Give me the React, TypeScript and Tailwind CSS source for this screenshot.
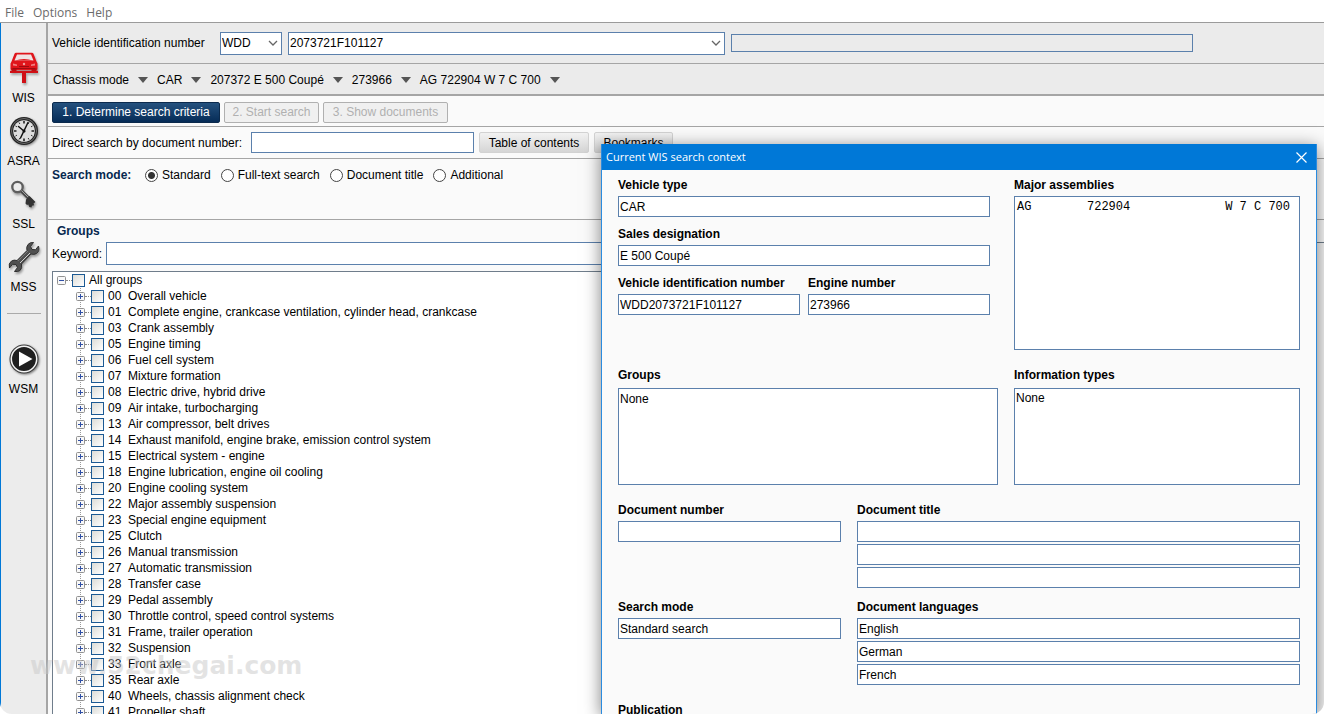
import React, { useState, type ReactNode } from "react";

const GROUPS: [string, string][] = [
  ["00", "Overall vehicle"],
  ["01", "Complete engine, crankcase ventilation, cylinder head, crankcase"],
  ["03", "Crank assembly"],
  ["05", "Engine timing"],
  ["06", "Fuel cell system"],
  ["07", "Mixture formation"],
  ["08", "Electric drive, hybrid drive"],
  ["09", "Air intake, turbocharging"],
  ["13", "Air compressor, belt drives"],
  ["14", "Exhaust manifold, engine brake, emission control system"],
  ["15", "Electrical system - engine"],
  ["18", "Engine lubrication, engine oil cooling"],
  ["20", "Engine cooling system"],
  ["22", "Major assembly suspension"],
  ["23", "Special engine equipment"],
  ["25", "Clutch"],
  ["26", "Manual transmission"],
  ["27", "Automatic transmission"],
  ["28", "Transfer case"],
  ["29", "Pedal assembly"],
  ["30", "Throttle control, speed control systems"],
  ["31", "Frame, trailer operation"],
  ["32", "Suspension"],
  ["33", "Front axle"],
  ["35", "Rear axle"],
  ["40", "Wheels, chassis alignment check"],
  ["41", "Propeller shaft"],
];

const CONTEXTS = ["Chassis mode", "CAR", "207372 E 500 Coupé", "273966", "AG 722904 W 7 C 700"];
const MODES = ["Standard", "Full-text search", "Document title", "Additional"];

function CarIcon() {
  return (
    <svg width="30" height="32" viewBox="0 0 30 32" aria-hidden="true" className="drop-shadow-[1px_2px_1px_rgba(0,0,0,0.3)]">
      <path d="M7 .8h16q1 0 1.500 1L27.500 9.500l1 2V17q0 1-1 1h-25q-1 0-1-1v-5.500l1-2L5.500 1.800q.5-1 1.500-1z" fill="#e0151b" />
      <path d="M8 2.500h14L24.500 8.500h-19z" fill="#efe3e3" />
      <path d="M6 8.500q9-3 18 0z" fill="#e0151b" />
      <path d="M2.500 16h5v3h-5zM22.500 16h5v3h-5z" fill="#b80d12" />
      <path d="M1 18.700h28v2.300H17V31h-4V21H1z" fill="#d01016" />
      <path d="M4 11.500l4 1v1.500l-4-.6zM26 11.500l-4 1v1.500l4-.6z" fill="#f08080" />
      <path d="M10 14.500h10M4 16.500h22" stroke="#a00b10" strokeWidth="1" />
      <circle cx="15" cy="12" r="1.200" fill="#f1a0a0" />
    </svg>
  );
}

function ClockIcon() {
  return (
    <svg width="30" height="30" viewBox="0 0 30 30" aria-hidden="true" className="drop-shadow-[1px_1px_1px_rgba(0,0,0,0.4)]">
      <circle cx="15" cy="15" r="14" fill="#232323" />
      <circle cx="15" cy="15" r="12.500" fill="none" stroke="#6d6d6d" strokeWidth="1" />
      <circle cx="15" cy="15" r="10.800" fill="#dedede" />
      <g stroke="#222" strokeWidth="1.600">
        <path d="M15 5v2.500M15 22.500V25M5 15h2.500M22.500 15H25" />
        <path d="M10 6.500l.8 1.400M20 6.500l-.8 1.400M6.500 10l1.400.8M23.500 10l-1.400.8M6.500 20l1.400-.8M23.500 20l-1.400-.8M10 23.500l.8-1.400M20 23.500l-.8-1.400" strokeWidth="1" />
      </g>
      <path d="M19 6.500L11.500 22M9.500 10.500l6 5" stroke="#111" strokeWidth="1.500" strokeLinecap="round" />
      <circle cx="15" cy="15" r="1.500" fill="#111" />
    </svg>
  );
}

function KeyIcon() {
  return (
    <svg width="28" height="30" viewBox="0 0 28 30" aria-hidden="true" className="drop-shadow-[1px_2px_1px_rgba(0,0,0,0.35)]">
      <circle cx="7.500" cy="8" r="5.200" fill="#ededed" stroke="#5e5e5e" strokeWidth="2.300" />
      <path d="M11.500 12L22 22.500" stroke="#4a4a4a" strokeWidth="3.400" />
      <path d="M11.500 11.500l11 11" stroke="#a0a0a0" strokeWidth="1" />
      <path d="M16 20.500l3.500-3.500 6 6-2 1.500.7 1.700-2.200.6-.5 1.700-2.200-.6-1-2.400-1.300.6-1.500-1.600z" fill="#333" />
    </svg>
  );
}

function WrenchIcon() {
  return (
    <svg width="32" height="32" viewBox="0 0 32 32" aria-hidden="true" className="drop-shadow-[1px_2px_1px_rgba(0,0,0,0.35)]">
      <path
        d="M20 3.500Q22 1 25.500 1.500L22.500 5.500l1.500 3 3.500.2L30.500 5Q32 10 28.500 12.500 26 14 23 13L13.500 23Q14.500 27 12 29.500 10 31 6.500 30.500L9.500 26.500 8 23.500l-3.500-.2L1.500 27Q0 22.500 3.500 20 6 18.500 9 19.500L19 9.500Q18 6 20 3.500z"
        fill="#505050"
        stroke="#303030"
        strokeWidth="1"
      />
      <path d="M12 22L22 12" stroke="#d0d0d0" strokeWidth="1" />
      <path d="M10 20L20 10" stroke="#777" strokeWidth="1" />
    </svg>
  );
}

function PlayIcon() {
  return (
    <svg width="30" height="30" viewBox="0 0 30 30" aria-hidden="true" className="drop-shadow-[1px_1px_1px_rgba(0,0,0,0.5)]">
      <circle cx="15" cy="15" r="14.500" fill="#3c3c3c" />
      <circle cx="15" cy="15" r="12.700" fill="#1f1f1f" stroke="#f4f4f4" strokeWidth="1.500" />
      <path d="M10 7.500L23.500 15 10 22.500z" fill="#fff" />
    </svg>
  );
}

function SideItem({ label, children }: { label: string; children: ReactNode }) {
  return (
    <button type="button" className="flex h-[63px] w-full flex-col items-center">
      <span className="flex h-9 items-center">{children}</span>
      <span className="mt-1 leading-4">{label}</span>
    </button>
  );
}

function Triangle() {
  return (
    <svg width="10" height="6" viewBox="0 0 10 6" aria-hidden="true">
      <path d="M0 0h10L5 6z" fill="#555" />
    </svg>
  );
}

function Combo({ label, value, className }: { label: string; value: string; className: string }) {
  return (
    <div className={`relative ${className}`}>
      <select aria-label={label} className="block h-[23px] w-full appearance-none border border-[#5b80ac] bg-white pl-px pr-5 text-[12px] outline-none">
        <option>{value}</option>
      </select>
      <svg className="pointer-events-none absolute right-1 top-2" width="10" height="7" viewBox="0 0 10 7" aria-hidden="true">
        <path d="M1 1l4 4 4-4" fill="none" stroke="#666" strokeWidth="1.300" />
      </svg>
    </div>
  );
}

function Expander({ open }: { open?: boolean }) {
  return (
    <svg width="9" height="9" viewBox="0 0 9 9" className="shrink-0" aria-hidden="true">
      <rect x=".5" y=".5" width="8" height="8" rx="1" fill="#f8f8f8" stroke="#919191" />
      <path d={open ? "M2 4.500h5" : "M2 4.500h5M4.500 2v5"} stroke="#2f4fa5" />
    </svg>
  );
}

const BOX =
  "m-0 size-[13px] shrink-0 appearance-none border border-[#1c5a94] bg-linear-to-br from-[#dcdcd7] to-white checked:from-[#1c5180]";

function TreeRow({ label, code, root }: { label: string; code?: string; root?: boolean }) {
  return (
    <li className={root ? "flex h-4 items-center pl-1" : "flex h-4 items-center bg-[linear-gradient(#999_50%,transparent_50%)] bg-[length:1px_2px] bg-[position:27px_0] bg-repeat-y pl-[23px]"}>
      <button type="button" aria-label={`Toggle ${label}`} className="flex shrink-0">
        <Expander open={root} />
      </button>
      <span className="w-[6px] shrink-0 border-t border-dotted border-[#888]" />
      <label className="flex items-center whitespace-pre">
        <input type="checkbox" className={BOX} />
        {code ? (
          <>
            <span className="ml-1 w-5">{code}</span>
            <span>{label}</span>
          </>
        ) : (
          <span className="ml-1">{label}</span>
        )}
      </label>
    </li>
  );
}

const FIELD = "block w-full border border-[#5b80ac] bg-white px-px text-[12px] leading-4 outline-none";

function Field({ label, values, className = "" }: { label: string; values: string[]; className?: string }) {
  return (
    <label className={`block ${className}`}>
      <span className="mb-[3px] block font-bold leading-4">{label}</span>
      <span className="flex flex-col gap-[2px]">
        {values.map((v, i) => (
          <input key={i} readOnly aria-label={label} defaultValue={v} className={`${FIELD} h-[21px]`} />
        ))}
      </span>
    </label>
  );
}

function Dialog() {
  return (
    <section
      role="dialog"
      aria-label="Current WIS search context"
      className="absolute right-[7px] top-36 bottom-0 w-[716px] overflow-hidden border-x border-[#2a8bdf] bg-[#fafafa] shadow-[0_3px_16px_rgba(0,0,0,0.5)]"
    >
      <header className="flex h-[26px] items-center justify-between bg-[#0078d7] pl-1 pr-[9px] font-['Open_Sans','Noto_Sans',sans-serif] text-[11px] text-white">
        <h2>Current WIS search context</h2>
        <button type="button" aria-label="Close">
          <svg width="11" height="11" viewBox="0 0 11 11" aria-hidden="true">
            <path d="M.5.500l10 10M10.500.5l-10 10" stroke="#fff" strokeWidth="1.200" />
          </svg>
        </button>
      </header>
      <div className="px-4 pt-[7px]">
        <div className="flex h-[190px] gap-6">
          <div className="flex flex-1 flex-col gap-[9px]">
            <Field label="Vehicle type" values={["CAR"]} />
            <Field label="Sales designation" values={["E 500 Coupé"]} />
            <div className="flex gap-2">
              <Field label="Vehicle identification number" values={["WDD2073721F101127"]} className="flex-1" />
              <Field label="Engine number" values={["273966"]} className="flex-1" />
            </div>
          </div>
          <div className="w-[286px]">
            <h3 className="mb-[3px] font-bold leading-4">Major assemblies</h3>
            <div className="flex h-[154px] border border-[#5b80ac] bg-white px-[2px] pt-[2px] font-['Liberation_Mono',monospace] leading-4">
              <span className="w-[70px]">AG</span>
              <span>722904</span>
              <span className="ml-auto pr-[7px]">W 7 C 700</span>
            </div>
          </div>
        </div>
        <div className="flex h-[135px] gap-4">
          <label className="flex flex-1 flex-col">
            <span className="mb-[5px] font-bold leading-4">Groups</span>
            <textarea readOnly defaultValue="None" className={`${FIELD} h-[97px] resize-none px-[2px] pt-[2px]`} />
          </label>
          <label className="flex w-[286px] flex-col">
            <span className="mb-[5px] font-bold leading-4">Information types</span>
            <textarea readOnly defaultValue="None" className={`${FIELD} h-[97px] resize-none pt-px`} />
          </label>
        </div>
        <div className="flex h-[97px] gap-4">
          <Field label="Document number" values={[""]} className="w-[223px]" />
          <Field label="Document title" values={["", "", ""]} className="flex-1" />
        </div>
        <div className="flex h-[103px] gap-4">
          <Field label="Search mode" values={["Standard search"]} className="w-[223px]" />
          <Field label="Document languages" values={["English", "German", "French"]} className="flex-1" />
        </div>
        <h3 className="font-bold leading-4">Publication</h3>
      </div>
    </section>
  );
}

export default function App() {
  const [mode, setMode] = useState("Standard");
  return (
    <div className="relative flex h-screen flex-col overflow-hidden rounded-b-xl bg-[#fafafa] font-['Liberation_Sans',Arial,sans-serif] text-[12px] text-black">
      <nav className="flex h-[23px] shrink-0 items-center gap-[9px] border-b border-[#9b9b9b] bg-white pl-[5px] pt-[3px] font-['Open_Sans','Noto_Sans',sans-serif] text-[#6b6b6b]">
        <button type="button">File</button>
        <button type="button">Options</button>
        <button type="button">Help</button>
      </nav>
      <div className="flex min-h-0 flex-1">
        <aside className="flex w-12 shrink-0 flex-col items-center border-l border-r-2 border-l-[#0078d7] border-r-[#a5a5a5] bg-[#ececec] pt-[27px]">
          <SideItem label="WIS"><CarIcon /></SideItem>
          <SideItem label="ASRA"><ClockIcon /></SideItem>
          <SideItem label="SSL"><KeyIcon /></SideItem>
          <SideItem label="MSS"><WrenchIcon /></SideItem>
          <hr className="mb-[27px] mt-[11px] w-[34px] border-[#aaa]" />
          <SideItem label="WSM"><PlayIcon /></SideItem>
        </aside>
        <main className="flex min-w-0 flex-1 flex-col">
          <div className="flex h-[41px] shrink-0 items-center border-b border-[#a5a5a5] bg-[#ebebeb] pl-1">
            <span className="w-42">Vehicle identification number</span>
            <Combo label="Manufacturer code" value="WDD" className="w-[62px]" />
            <Combo label="Vehicle identification number" value="2073721F101127" className="ml-[6px] w-[437px]" />
            <output className="ml-[6px] mr-[131px] h-[18px] flex-1 border border-[#5b80ac]" />
          </div>
          <div className="flex h-8 shrink-0 items-center gap-[9px] border-b-2 border-[#a5a5a5] bg-[#ebebeb] pl-[5px] pt-[2px]">
            {CONTEXTS.map((c) => (
              <button key={c} type="button" className="flex items-center gap-[9px]">
                {c}
                <Triangle />
              </button>
            ))}
          </div>
          <div className="flex h-[31px] shrink-0 items-center gap-1 border-b border-[#a5a5a5] pl-1 pt-[2px]">
            <button type="button" className="h-[21px] w-42 rounded-xs border border-[#0b2a4d] bg-linear-to-b from-[#24517e] to-[#062c57] text-white">
              1. Determine search criteria
            </button>
            <button type="button" disabled className="h-[21px] w-[95px] rounded-xs border border-[#b0b0b0] bg-[#f0f0f0] text-[#b0b0b0]">
              2. Start search
            </button>
            <button type="button" disabled className="h-[21px] w-[125px] rounded-xs border border-[#b0b0b0] bg-[#f0f0f0] text-[#b0b0b0]">
              3. Show documents
            </button>
          </div>
          <div className="flex h-8 shrink-0 items-center border-b border-[#a5a5a5] pl-1">
            <label htmlFor="docnum" className="w-[199px]">Direct search by document number:</label>
            <input id="docnum" className="h-[21px] w-[223px] border border-[#5b80ac] bg-white outline-none" />
            <button type="button" className="ml-[5px] h-[21px] w-[110px] rounded-xs border border-[#d2d2d2] bg-linear-to-b from-[#f2f2f2] to-[#d5d5d5]">
              Table of contents
            </button>
            <button type="button" className="ml-[5px] h-[21px] w-[79px] rounded-xs border border-[#d2d2d2] bg-linear-to-b from-[#f2f2f2] to-[#d5d5d5]">
              Bookmarks
            </button>
          </div>
          <fieldset className="flex h-[61px] shrink-0 items-start border-b border-[#a5a5a5] pl-1 pt-2">
            <span className="w-[93px] font-bold leading-4 text-[#06284f]">Search mode:</span>
            <span className="flex gap-[10px]">
              {MODES.map((m) => (
                <label key={m} className="flex items-center gap-1 leading-4">
                  <input
                    type="radio"
                    name="mode"
                    checked={mode === m}
                    onChange={() => setMode(m)}
                    className="m-0 size-[13px] appearance-none rounded-full border border-[#444] bg-white checked:bg-[radial-gradient(circle,#333_0_3px,#fff_4px)]"
                  />
                  {m}
                </label>
              ))}
            </span>
          </fieldset>
          <div className="flex min-h-0 flex-1">
            <section className="flex min-w-0 flex-1 flex-col pl-1 pt-[3px]">
              <h2 className="pl-[5px] font-bold leading-4 text-[#06284f]">Groups</h2>
              <div className="mt-[3px] flex items-center">
                <label htmlFor="keyword" className="w-[54px]">Keyword:</label>
                <input id="keyword" className="h-[23px] flex-1 border border-[#5b80ac] bg-white outline-none" />
              </div>
              <ul className="mt-[6px] min-h-0 flex-1 overflow-hidden border-l border-t border-[#6f7d8b] bg-white">
                <TreeRow root label="All groups" />
                {GROUPS.map(([code, label]) => (
                  <TreeRow key={code} code={code} label={label} />
                ))}
              </ul>
            </section>
            <section className="flex w-1/2 flex-col pt-[22px]">
              <div className="flex-1 border-t border-[#6f7d8b] bg-[#f4f4f4]" />
            </section>
          </div>
        </main>
      </div>
      <Dialog />
      <div className="pointer-events-none absolute bottom-8 left-[30px] font-['DejaVu_Sans',sans-serif] text-[25px] font-bold leading-8 text-[#c8c8c8]/50">
        www.52chegai.com
      </div>
    </div>
  );
}
